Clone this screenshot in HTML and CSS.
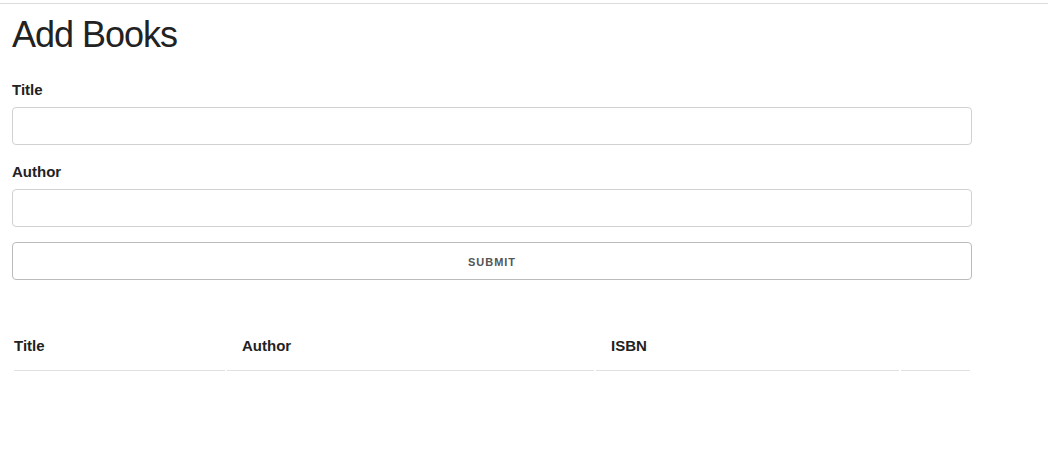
FILE: index.html
```html
<!DOCTYPE html>
<html lang="en">
<head>
<meta charset="utf-8">
<title>Add Books</title>
<link rel="stylesheet" href="styles.css">
</head>
<body>
<div class="topbar"></div>
<div class="container">
  <h1 class="page-title">Add Books</h1>
  <form class="book-form">
    <label class="field-label" for="title">Title</label>
    <input class="text-input" id="title" type="text">
    <label class="field-label" for="author">Author</label>
    <input class="text-input" id="author" type="text">
    <button class="submit-btn" type="button">Submit</button>
  </form>
  <table class="books-table">
    <thead>
      <tr>
        <th class="col-title">Title</th>
        <th class="col-author">Author</th>
        <th class="col-isbn">ISBN</th>
        <th class="col-actions"></th>
      </tr>
    </thead>
    <tbody></tbody>
  </table>
</div>
</body>
</html>
```
FILE: styles.css
```css
* { box-sizing: border-box; }

html, body {
  margin: 0;
  padding: 0;
  background: #fff;
}

body {
  font-family: "Liberation Sans", Arial, Helvetica, sans-serif;
  font-size: 15px;
  line-height: 1.6;
  color: #222;
}

.topbar {
  height: 4px;
  border-bottom: 1px solid #dcdcdc;
}

.container {
  width: 960px;
  margin-left: 12px;
}

.page-title {
  margin: 9px 0 22px 0;
  font-size: 36px;
  line-height: 1.2;
  font-weight: 400;
  letter-spacing: -1px;
  color: #222;
}

.book-form {
  display: flex;
  flex-direction: column;
  margin: 0;
}

.field-label {
  display: block;
  font-weight: 700;
  margin-bottom: 5px;
}

.text-input {
  display: block;
  width: 100%;
  height: 38px;
  padding: 6px 10px;
  margin: 0 0 15px 0;
  border: 1px solid #d1d1d1;
  border-radius: 4px;
  background: #fff;
  font-family: inherit;
  font-size: 15px;
}

.submit-btn {
  display: block;
  width: 100%;
  height: 38px;
  padding: 2px 30px 0 30px;
  margin: 0 0 40px 0;
  border: 1px solid #bbb;
  border-radius: 4px;
  background: transparent;
  color: #555;
  font-family: inherit;
  font-size: 11px;
  font-weight: 700;
  line-height: 34px;
  letter-spacing: 1px;
  text-transform: uppercase;
  text-align: center;
}

.books-table {
  width: 960px;
  table-layout: fixed;
  border-collapse: separate;
  border-spacing: 2px;
  margin: 0;
}

.books-table th {
  text-align: left;
  font-weight: 700;
  font-size: 15px;
  line-height: 24px;
  padding: 12px 15px;
  border-bottom: 1px solid #e1e1e1;
}

.books-table th.col-title {
  width: 211px;
  padding-left: 0;
}

.books-table th.col-author { width: 367px; }
.books-table th.col-isbn { width: 303px; }

.books-table th.col-actions {
  width: 69px;
  padding-right: 0;
}
```
